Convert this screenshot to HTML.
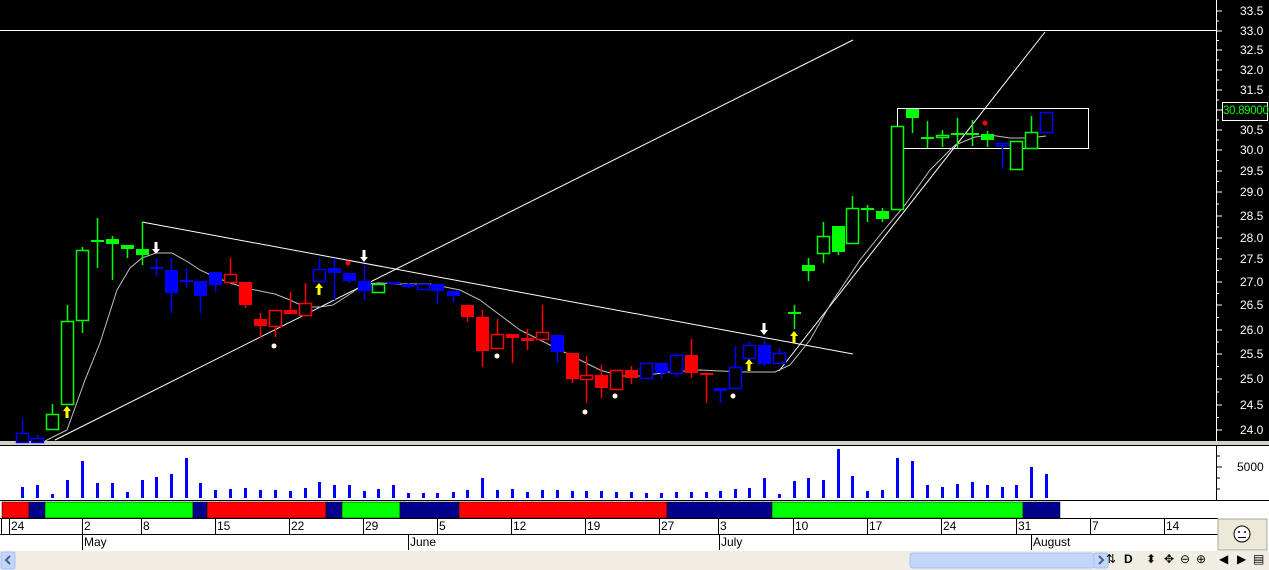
<!DOCTYPE html>
<html><head><meta charset="utf-8"><style>
body{margin:0;width:1269px;height:570px;overflow:hidden;background:#ece9d8;font-family:"Liberation Sans",sans-serif;position:relative}
#main{position:absolute;left:0;top:0;width:1269px;height:441px;background:#000}
.sep{position:absolute;left:0;top:441px;width:1269px;height:4px;background:#d4d0c8}
.t{position:absolute;font-size:12px;color:#000;white-space:nowrap}
.ic{position:absolute;top:552px;font-size:12px;color:#000}
</style></head><body>
<div id="main"></div>
<div class="sep"></div>
<svg id="s" width="1269" height="570" style="position:absolute;left:0;top:0">
<rect x="0" y="445" width="1269" height="106" fill="#fff"/>
<line x1="0" y1="445.5" x2="1269" y2="445.5" stroke="#000"/>
<line x1="0" y1="500.5" x2="1269" y2="500.5" stroke="#000"/>
<line x1="0" y1="518.5" x2="1218" y2="518.5" stroke="#000"/>
<line x1="0" y1="534.5" x2="1218" y2="534.5" stroke="#000"/>
<line x1="1216.5" y1="445" x2="1216.5" y2="500" stroke="#000"/>
<line x1="1216.5" y1="0" x2="1216.5" y2="441" stroke="#fff"/>
<rect x="0" y="551" width="1269" height="19" fill="#f0eee4"/>
<rect x="1" y="552" width="14" height="17" rx="2" fill="#c2d6fb" stroke="#a7c0ee"/>
<path d="M10 556l-4 4l4 4" fill="none" stroke="#4d6185" stroke-width="2"/>
<rect x="910" y="553" width="184" height="15" rx="3" fill="#c2d6fb" stroke="#a7c0ee"/>
<rect x="1094" y="553" width="14" height="15" rx="2" fill="#c2d6fb" stroke="#a7c0ee"/>
<path d="M1099 556l4 4l-4 4" fill="none" stroke="#4d6185" stroke-width="2"/>
<rect x="1218" y="519" width="49" height="31" fill="#ece9d8" stroke="#aca899"/>
<circle cx="1242" cy="534" r="8" fill="#fff" stroke="#000"/>
<circle cx="1239" cy="532" r="1" fill="#000"/><circle cx="1245" cy="532" r="1" fill="#000"/>
<line x1="1238" y1="537.5" x2="1246" y2="537.5" stroke="#000"/>
<g id="g"></g>
</svg>
<div id="labels"></div>
<div class="t" style="left:1222px;top:102px;width:44px;height:17px;border:1px solid #fff;background:#000;color:#0f0;font-size:11.5px;line-height:17px;text-align:center;letter-spacing:-0.3px">30.89000</div>
<div class="t" style="left:1237px;top:460px">5000</div>
<div class="ic" style="left:1106px">⇅</div><div class="ic" style="left:1124px;font-weight:bold">D</div>
<div class="ic" style="left:1146px">⬍</div><div class="ic" style="left:1164px">✥</div>
<div class="ic" style="left:1180px">⊖</div><div class="ic" style="left:1196px">⊕</div>
<div class="ic" style="left:1219px">◀</div><div class="ic" style="left:1237px">▶</div><div class="ic" style="left:1253px">▤</div>
<script>
const g=document.getElementById('g');let h='';
const L=(a,b,c,d,s,w)=>h+=`<line x1="${a}" y1="${b}" x2="${c}" y2="${d}" stroke="${s}" stroke-width="${w||1}"/>`;
let lab='';
const ys=[11,31,50,70,90,110,130,150,171,192,216,238,259,282,305,330,354,379,405,430];
ys.forEach((y,i)=>{const p=33.5-i*0.5;if(i!=5)lab+=`<div class="t" style="left:1240px;top:${y-7}px;color:#fff;font-size:12px">${p.toFixed(1)}</div>`;L(1216,y,1222,y,'#fff');if(i<19){const m=(y+ys[i+1])/2;L(1216,m,1219,m,'#fff');}});
L(1216,456,1220,456,'#000');L(1216,467,1222,467,'#000');L(1216,478,1220,478,'#000');L(1216,489,1220,489,'#000');
[[2,29,'#f00'],[29,45,'#00008b'],[45,193,'#0f0'],[193,207,'#00008b'],[207,326,'#f00'],[326,342,'#00008b'],[342,400,'#0f0'],[400,459,'#00008b'],[459,667,'#f00'],[667,772,'#00008b'],[772,1023,'#0f0'],[1023,1060,'#00008b']].forEach(s=>h+=`<rect x="${s[0]}" y="502" width="${s[1]-s[0]}" height="16" fill="${s[2]}" stroke="#000" stroke-width="0.5"/>`);
[[9,'24'],[82,'2'],[141,'8'],[215,'15'],[289,'22'],[363,'29'],[437,'5'],[511,'12'],[585,'19'],[659,'27'],[718,'3'],[793,'10'],[867,'17'],[941,'24'],[1016,'31'],[1090,'7'],[1164,'14']].forEach(d=>{L(d[0]+.5,519,d[0]+.5,534,'#000');lab+=`<div class="t" style="left:${d[0]+2}px;top:519px">${d[1]}</div>`});
L(1.5,519,1.5,534,'#000');
[[82,'May'],[408,'June'],[719,'July'],[1031,'August']].forEach(d=>{L(d[0]+.5,535,d[0]+.5,550,'#000');lab+=`<div class="t" style="left:${d[0]+2}px;top:535px">${d[1]}</div>`});
document.getElementById('labels').innerHTML=lab;
L(0,30.5,1216,30.5,'#fff');
L(55,440,853,40,'#fff');L(142,222,853,354,'#fff');L(779,371,1045,32,'#fff');
h+=`<rect x="897.5" y="108.5" width="191" height="40" fill="none" stroke="#fff"/>`;
const ma=[[45,441],[67,430],[85,380],[100,343],[117,290],[130,268],[142,258],[156,253],[172,253],[188,262],[200,270],[215,277],[230,283],[250,289],[275,294],[290,300],[305,307],[320,307],[333,305],[350,294],[364,284],[380,283],[400,284],[430,284],[460,290],[480,300],[500,315],[520,330],[540,340],[560,350],[580,360],[600,370],[620,376],[640,376],[670,372],[700,370],[720,371],[745,372],[775,372],[790,365],[810,340],[830,305],[860,260],[880,235],[905,205],[930,170],[955,145],[975,137],[990,135],[1010,138],[1030,138],[1046,136]];
h+=`<polyline points="${ma.map(p=>p.join(',')).join(' ')}" fill="none" stroke="#c0c0c0"/>`;
const G='#0f0',B='#00f',R='#f00';
const c=[[22,433,442,419,442,B,0],[37,438,442,435,442,B,0],[52,414,429,404,429,G,0],[67,321,404,305,404,G,0],[82,250,320,247,333,G,0],[97,240,241,218,268,G,1],[112,239,244,236,280,G,1],[127,245,249,245,258,G,1],[142,249,255,222,265,G,1],[156,267,268,258,277,B,1],[171,270,293,258,313,B,1],[186,280,281,268,288,B,1],[200,281,296,281,313,B,1],[215,272,285,272,292,B,1],[230,274,282,258,282,R,0],[245,282,305,282,308,R,1],[260,319,326,313,338,R,1],[275,310,326,310,337,R,0],[290,310,314,292,314,R,1],[305,303,315,283,315,R,0],[319,269,281,258,281,B,0],[334,268,273,258,300,B,1],[349,273,281,273,283,B,1],[364,281,291,265,300,B,1],[378,284,292,282,292,G,0],[393,282,284,282,285,B,1],[408,284,287,283,288,B,1],[423,284,289,284,289,B,0],[437,284,291,284,304,B,1],[453,291,296,291,303,B,1],[467,305,317,305,322,R,1],[482,317,351,310,367,R,1],[497,334,348,319,348,R,0],[512,334,338,334,363,R,1],[527,338,341,329,350,R,1],[542,332,339,305,339,R,0],[557,335,352,335,363,B,1],[572,353,379,353,383,R,1],[586,375,379,356,403,R,0],[601,375,388,365,398,R,1],[616,370,389,370,389,R,0],[631,370,378,366,384,R,1],[646,363,378,363,378,B,0],[661,363,373,363,379,B,1],[676,355,373,353,377,B,0],[691,355,373,339,378,R,1],[706,373,375,373,403,R,1],[720,388,391,388,403,B,1],[735,367,388,346,388,B,0],[749,345,358,342,358,B,0],[764,345,364,339,366,B,1],[779,353,363,348,363,B,0],[794,312,313,305,329,G,1],[808,265,271,258,281,G,1],[823,236,253,222,263,G,0],[838,226,252,226,255,G,1],[852,208,243,196,243,G,0],[867,208,210,205,222,G,1],[882,211,219,208,222,G,1],[897,126,209,126,209,G,0],[912,109,118,109,133,G,1],[927,137,138,121,148,G,1],[942,135,137,130,147,G,0],[957,133,135,118,148,G,1],[972,133,134,120,146,G,1],[987,134,140,131,147,G,1],[1002,143,145,143,169,B,0],[1016,141,169,141,169,G,0],[1031,132,148,116,148,G,0],[1046,112,132,112,132,B,0]];
c.forEach(k=>{L(k[0]+.5,k[3],k[0]+.5,k[4],k[5],1.5);const ht=Math.max(2,k[2]-k[1]);h+=k[6]?`<rect x="${k[0]-6}" y="${k[1]}" width="13" height="${ht}" fill="${k[5]}"/>`:`<rect x="${k[0]-5.5}" y="${k[1]+.5}" width="12" height="${ht}" fill="#000" stroke="${k[5]}" stroke-width="1.5"/>`;});
const vt=[487,485,494,480,461,483,483,492,480,477,474,458,483,490,489,488,490,490,491,488,482,485,485,491,489,485,493,493,493,492,490,478,490,489,492,490,490,491,491,491,492,492,493,493,492,492,492,491,489,488,478,494,481,478,480,449,476,491,490,458,461,485,487,484,482,485,487,485,467,474];
c.forEach((k,i)=>h+=`<rect x="${k[0]-1}" y="${vt[i]}" width="3" height="${498-vt[i]}" fill="#00f"/>`);
const up=(x,y,col)=>h+=`<path d="M${x} ${y}l-4 5h2.5v7h3v-7h2.5z" fill="${col}"/>`;
const dn=(x,y)=>h+=`<path d="M${x-1.5} ${y}h3v7h2.5l-4 5l-4-5h2.5z" fill="#fff"/>`;
up(67,406,'#ff0');up(319,283,'#ff0');up(749,359,'#ff0');up(794,331,'#ff0');
dn(156,242);dn(364,250);dn(764,323);
[[274,346],[497,356],[585,412],[615,396],[733,396]].forEach(p=>h+=`<circle cx="${p[0]}" cy="${p[1]}" r="2.5" fill="#fffde0"/>`);
[[348,263],[985,123]].forEach(p=>h+=`<circle cx="${p[0]}" cy="${p[1]}" r="2.5" fill="#f00"/>`);
g.innerHTML=h;
</script>
</body></html>
